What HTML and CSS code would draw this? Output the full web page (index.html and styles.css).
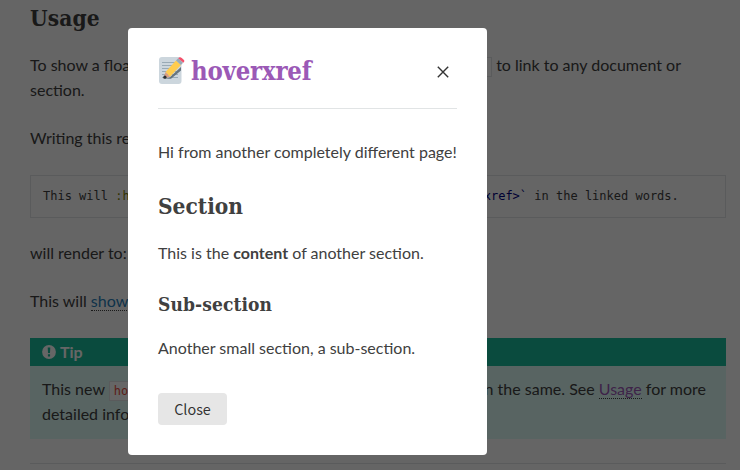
FILE: index.html
```
<!DOCTYPE html>
<html lang="en">
<head>
<meta charset="utf-8">
<title>hoverxref</title>
<link rel="stylesheet" href="styles.css">
</head>
<body>
<main class="document">
  <h2 class="heading">Usage</h2>
  <div class="paragraph">
    <div class="line line-intro"><span>To show a floating window, use</span><span><code class="literal">:hoverxref:</code> to link to any document or</span></div>
    <div class="line">section.</div>
  </div>
  <p class="text">Writing this reStructuredText</p>
  <pre class="code">This will <span class="role">:hoverxref:</span><span class="target">`show a floating window &lt;hoverxref:hoverxref&gt;`</span> in the linked words.</pre>
  <p class="text">will render to:</p>
  <p class="text">This will <a class="link" href="#">show a floating window</a></p>
  <section class="tip">
    <h3 class="tip-title"><svg class="tip-icon" viewBox="0 0 14 14"><circle cx="7" cy="7" r="6.9" fill="#fff"/><path d="M5.7 2.4h2.6L8 8.1H6z M5.9 9.3h2.2v2.2H5.9z" fill="#1abc9c"/></svg>Tip</h3>
    <div class="line line-tip"><span>This new <code class="literal">hoverxref</code></span><span>even the same. See <a class="link visited" href="#">Usage</a> for more</span></div>
    <div class="line">detailed information.</div>
  </section>
  <hr class="rule">
</main>
<div class="overlay">
  <section class="modal" role="dialog" aria-modal="true">
    <header class="modal-header">
      <svg class="memo" viewBox="0 0 28 28">
        <rect x="1" y="1" width="22.5" height="27" rx="3" fill="#ccd6dd"/>
        <path d="M4 6.5h13M4 9.5h13M4 12.5h13M4 15.5h16M4 18.5h16M4 21.5h16" stroke="#99aab5" stroke-width="1.1"/>
        <path d="M6 22.5l5-.5L23 11v3.5L13 22.8H5z" fill="#66757f"/>
        <path d="M7.5 16L18 4.5l4.9 4.5L12 20.8z" fill="#ffcc4d"/>
        <path d="M7.5 16l4.5 4.8L5.5 22.5z" fill="#d99e82"/>
        <circle cx="6.9" cy="21.2" r="1.6" fill="#292f33"/>
        <path d="M18 4.5l2.2-2.3L25.1 6.7l-2.2 2.3z" fill="#99aab5"/>
        <path d="M20.2 2.2c1.3-1.4 2.4-1.2 3.6-.1l1.9 1.7c1 .9 1 1.6-.3 3z" fill="#f4506a"/>
      </svg>
      <h1 class="modal-title">hoverxref</h1>
      <button class="dismiss" aria-label="Close"><svg viewBox="0 0 12 12"><path d="M.8.8l10.4 10.4M11.2.8L.8 11.2" stroke="#333" stroke-width="1.4"/></svg></button>
    </header>
    <hr class="modal-rule">
    <p class="modal-text">Hi from another completely different page!</p>
    <h2 class="modal-section">Section</h2>
    <p class="modal-text">This is the <strong>content</strong> of another section.</p>
    <h3 class="modal-subsection">Sub-section</h3>
    <p class="modal-text">Another small section, a sub-section.</p>
    <button class="close">Close</button>
  </section>
</div>
</body>
</html>
```
FILE: styles.css
```
* { box-sizing: border-box; }
body {
  margin: 0;
  height: 470px;
  overflow: hidden;
  background: #fcfcfc;
  color: #404040;
  font: 16px/24px Lato, "Liberation Sans", sans-serif;
}
h1, h2, h3, p, pre { margin: 0; }
.document { width: 726px; padding-left: 30px; }
.heading, .modal-title, .modal-section, .modal-subsection {
  font-family: "Roboto Slab", "DejaVu Serif Condensed", "DejaVu Serif", serif;
  font-weight: 700;
  white-space: nowrap;
}
.heading { padding-top: 4px; height: 52px; font-size: 22.5px; line-height: 29px; letter-spacing: .1px; }
.line { display: flex; justify-content: space-between; height: 25px; line-height: 25px; white-space: nowrap; }
.line-intro { width: 651px; }
.line-tip { width: 664px; }
.paragraph { margin-bottom: 24px; }
.text { margin-bottom: 24px; }
.literal {
  padding: 2px 4px;
  border: 1px solid #e1e4e5;
  background: #fff;
  color: #e74c3c;
  font: 12px/12px "DejaVu Sans Mono", monospace;
}
.code {
  height: 43px;
  margin: 25px 0 23px;
  padding: 12px;
  border: 1px solid #e1e4e5;
  font: 12px/17px "DejaVu Sans Mono", monospace;
}
.role { color: #808000; }
.target { color: #000080; }
.link { color: #2980b9; text-decoration: none; border-bottom: 1px dotted #404040; }
.visited { color: #9b59b6; }
.tip { height: 101px; margin: 25px 0 24px; padding: 0 12px; background: #dbfaf4; }
.tip-title {
  display: flex;
  align-items: center;
  gap: 4px;
  height: 28px;
  margin: 0 -12px 10px;
  padding: 0 12px;
  background: #1abc9c;
  color: #fff;
  font-size: 16px;
}
.tip-icon { width: 14px; height: 14px; }
.rule { margin: 0; border: 0; border-top: 1px solid #e1e4e5; }
.overlay { position: absolute; inset: 0; padding: 28px 0 0 128px; background: rgba(0,0,0,.6); }
.modal { width: 359px; height: 427px; padding: 29px 30px 30px; border-radius: 4px; background: #fff; }
.modal-header { display: flex; align-items: center; height: 29px; }
.memo { width: 28px; height: 28px; margin: 0 5px 3px 0; }
.modal-title { color: #9b59b6; font-size: 25.5px; line-height: 29px; letter-spacing: -.2px; }
.dismiss { width: 12px; height: 12px; margin: 0 8px 0 auto; padding: 0; border: 0; background: none; }
.dismiss svg { display: block; }
.modal-rule { margin: 22px 0 31px; border: 0; border-top: 1px solid #e1e4e5; }
.modal-text { white-space: nowrap; }
.modal-section { margin: 27px 0 20px; font-size: 22.5px; line-height: 30px; letter-spacing: 0; }
.modal-subsection { margin: 26px 0 19px; font-size: 19px; line-height: 26px; letter-spacing: .1px; }
.close {
  display: block;
  width: 69px;
  height: 32px;
  margin-top: 33px;
  padding: 0;
  border: 0;
  border-radius: 4px;
  background: #e6e6e6;
  color: rgba(0,0,0,.8);
  font: 14.4px/32px "Noto Sans CJK SC", "Noto Sans", sans-serif;
}
```
